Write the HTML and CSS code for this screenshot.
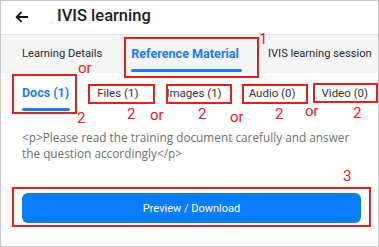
FILE: index.html
```html
<!DOCTYPE html>
<html lang="en">
<head>
    <meta charset="UTF-8">
    <title>IVIS learning</title>
    <link rel="stylesheet" href="styles.css">
</head>
<body>
    <div class="screen">
        <header class="topbar">
            <svg class="back" width="14" height="12" viewBox="0 0 14 12"><path d="M13 6H2M6.5 1.2L1.7 6l4.8 4.8" fill="none" stroke="#111" stroke-width="1.8"/></svg>
            <h1>IVIS learning</h1>
        </header>

        <nav class="tabs">
            <span class="tab">Learning Details</span>
            <span class="tab active">Reference Material</span>
            <span class="tab">IVIS learning session</span>
        </nav>

        <div class="subtabs">
            <span class="sub active">Docs (1)</span>
            <span class="sub">Files (1)</span>
            <span class="sub">Images (1)</span>
            <span class="sub">Audio (0)</span>
            <span class="sub">Video (0)</span>
        </div>

        <p class="desc">&lt;p&gt;Please read the training document carefully and answer the question accordingly&lt;/p&gt;</p>

        <button class="preview">Preview / Download</button>

        <!-- annotations drawn over the screenshot -->
        <div class="mark box1"></div><span class="note n1">1</span>
        <span class="note or1">or</span>
        <div class="mark box2"></div><span class="note n2a">2</span>
        <div class="mark box3"></div><span class="note n2b">2</span><span class="note or2">or</span>
        <div class="mark box4"></div><span class="note n2c">2</span><span class="note or3">or</span>
        <div class="mark box5"></div><span class="note n2d">2</span><span class="note or4">or</span>
        <div class="mark box6"></div><span class="note n2e">2</span>
        <span class="note n3">3</span>
        <div class="mark box7"></div>
    </div>
</body>
</html>
```

FILE: styles.css
```css
* { margin: 0; padding: 0; box-sizing: border-box; }
body { font-family: Roboto, "Liberation Sans", sans-serif; background: #fff; }
.screen { position: relative; width: 379px; height: 247px; border: 1px solid #c9c9c9; overflow: hidden; }

/* barra superior */
.topbar { height: 34px; display: flex; align-items: center; border-bottom: 1px solid #e6e6e6; padding-left: 14px; }
.back { margin-top: -2px; }
.topbar h1 { font-size: 16.5px; font-weight: 500; color: #1c1c1c; margin-left: 28px; margin-top: -4px; }

/* pestañas */
.tabs { height: 38px; background: #f5f5f7; display: flex; padding-left: 21px; gap: 29px; white-space: nowrap; }
.tab { font-size: 11.2px; color: #2a2a2a; line-height: 38px; position: relative; }
.tab.active { color: #1a7df5; font-weight: 700; font-size: 12.6px; }
.tab.active::after { content: ""; position: absolute; left: 0; right: -3px; bottom: 1px; height: 3px; border-radius: 2px; background: #1a7df5; }

.subtabs { display: flex; padding: 10px 0 0 21px; gap: 28px; height: 48px; white-space: nowrap; }
.sub { font-size: 11.5px; color: #333; height: 28px; line-height: 20px; position: relative; }
.sub:nth-child(4) { margin-left: -1px; }
.sub:nth-child(5) { margin-left: -2px; }
.sub.active { color: #1a7df5; font-weight: 700; font-size: 12.5px; }
.sub.active::after { content: ""; position: absolute; left: 0; right: -1px; bottom: 0; height: 3px; border-radius: 2px; background: #1a7df5; }

.desc { font-family: "Open Sans", sans-serif; font-size: 11.8px; line-height: 16px; color: #707070; padding: 8px 16px 0 21px; height: 72px; }

.preview { display: block; margin-left: 21px; width: 339px; height: 30px; border: none; border-radius: 6px; background: #0a7cfe; color: #fff; font-family: inherit; font-size: 11px; }

/* anotaciones rojas */
.mark { position: absolute; border: 2px solid #e3201f; }
.note { position: absolute; color: #e3201f; font-size: 15px; line-height: 1; font-family: Roboto, sans-serif; }
.box1 { left: 123px; top: 36px; width: 135px; height: 41px; }
.n1 { left: 258px; top: 31px; }
.or1 { left: 77px; top: 60px; }
.box2 { left: 11px; top: 73px; width: 65px; height: 40px; }
.n2a { left: 76px; top: 110px; }
.box3 { left: 87px; top: 83px; width: 67px; height: 20px; }
.n2b { left: 126px; top: 106px; }
.or2 { left: 149px; top: 107px; }
.box4 { left: 165px; top: 83px; width: 66px; height: 20px; }
.n2c { left: 197px; top: 106px; }
.or3 { left: 229px; top: 109px; }
.box5 { left: 241px; top: 83px; width: 66px; height: 20px; }
.n2d { left: 274px; top: 106px; }
.or4 { left: 304px; top: 103px; }
.box6 { left: 312px; top: 82px; width: 65px; height: 20px; }
.n2e { left: 352px; top: 105px; }
.n3 { left: 342px; top: 168px; }
.box7 { left: 11px; top: 186px; width: 359px; height: 40px; }
```
